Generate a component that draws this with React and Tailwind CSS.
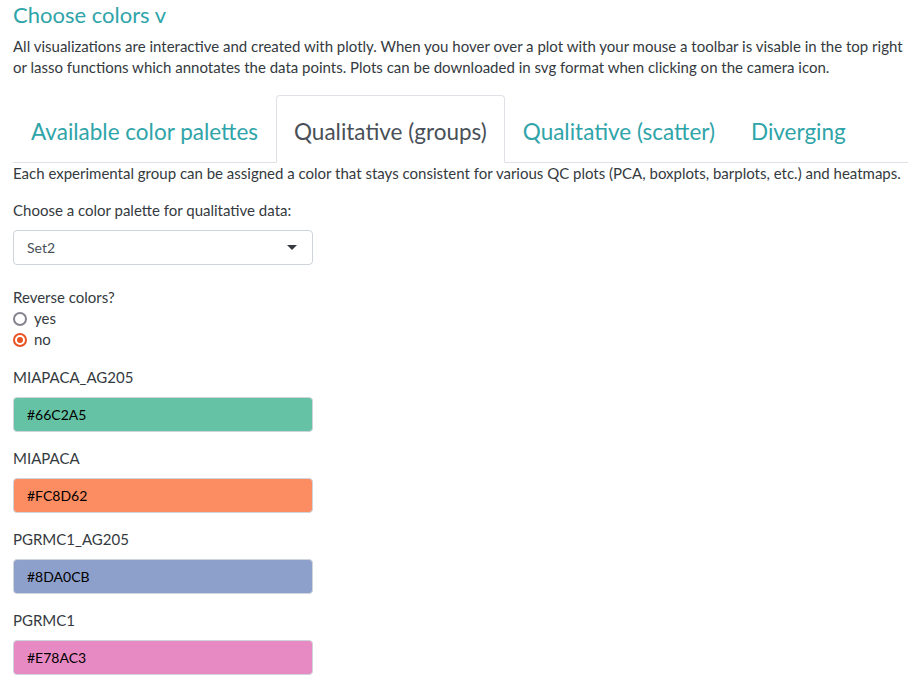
import { useState } from "react";

const groups = [
  { name: "MIAPACA_AG205", color: "#66C2A5" },
  { name: "MIAPACA", color: "#FC8D62" },
  { name: "PGRMC1_AG205", color: "#8DA0CB" },
  { name: "PGRMC1", color: "#E78AC3" },
];

const tabs = ["Available color palettes", "Qualitative (groups)", "Qualitative (scatter)", "Diverging"];

function Radio({ label, checked, onClick }) {
  return (
    <label className="flex items-center gap-[7px] h-[21px] cursor-pointer" onClick={onClick}>
      {checked ? (
        <span className="w-[14px] h-[14px] rounded-full border-[2px] border-[#e95420] flex items-center justify-center">
          <span className="w-[6px] h-[6px] rounded-full bg-[#e95420]"></span>
        </span>
      ) : (
        <span className="w-[14px] h-[14px] rounded-full border-[2px] border-[#85838f]"></span>
      )}
      <span>{label}</span>
    </label>
  );
}

export default function App() {
  const [activeTab, setActiveTab] = useState(1);
  const [reverse, setReverse] = useState(false);

  return (
    <div className="pl-[13px] text-[15px] leading-[21px] text-[#343a40] bg-white min-h-[690px]" style={{ fontFamily: "Lato, 'Open Sans', sans-serif" }}>
      <h3 className="text-[22px] leading-[30px] text-[#2fa4a9] pt-0">Choose colors v</h3>
      <p className="mt-[6px] whitespace-nowrap">
        All visualizations are interactive and created with plotly. When you hover over a plot with your mouse a toolbar is visable in the top right<br />
        or lasso functions which annotates the data points. Plots can be downloaded in svg format when clicking on the camera icon.
      </p>

      <ul className="flex mt-[17px] border-b border-[#dee2e6]">
        {tabs.map((t, i) => (
          <li key={t} className="-mb-px">
            <button
              onClick={() => setActiveTab(i)}
              className={
                "px-[17px] pt-[20px] pb-[14px] text-[22.5px] leading-[32px] rounded-t-[4px] border " +
                (i === activeTab
                  ? "text-[#495057] bg-white border-[#dee2e6] border-b-white"
                  : "text-[#2fa4a9] border-transparent")
              }
            >
              {t}
            </button>
          </li>
        ))}
      </ul>

      <p className="mt-0 whitespace-nowrap">Each experimental group can be assigned a color that stays consistent for various QC plots (PCA, boxplots, barplots, etc.) and heatmaps.</p>

      <div className="mt-[16px]">Choose a color palette for qualitative data:</div>
      <div className="mt-[9px] w-[300px] h-[35px] border border-[#ced4da] rounded-[4px] flex items-center justify-between pl-[13px] pr-[15px]">
        <span className="text-[#495057] text-[14px]">Set2</span>
        <span className="w-0 h-0 border-l-[5px] border-r-[5px] border-t-[5px] border-l-transparent border-r-transparent border-t-[#343a40]"></span>
      </div>

      <div className="mt-[22px]">Reverse colors?</div>
      <Radio label="yes" checked={reverse} onClick={() => setReverse(true)} />
      <Radio label="no" checked={!reverse} onClick={() => setReverse(false)} />

      <div className="mt-[17px] flex flex-col">
        {groups.map((g) => (
          <div key={g.name} className="mb-[16px]">
            <div>{g.name}</div>
            <div
              className="mt-[9px] w-[300px] h-[35px] border border-[#ced4da] rounded-[4px] flex items-center pl-[13px] text-black text-[14px]"
              style={{ backgroundColor: g.color }}
            >
              {g.color}
            </div>
          </div>
        ))}
      </div>
    </div>
  );
}
